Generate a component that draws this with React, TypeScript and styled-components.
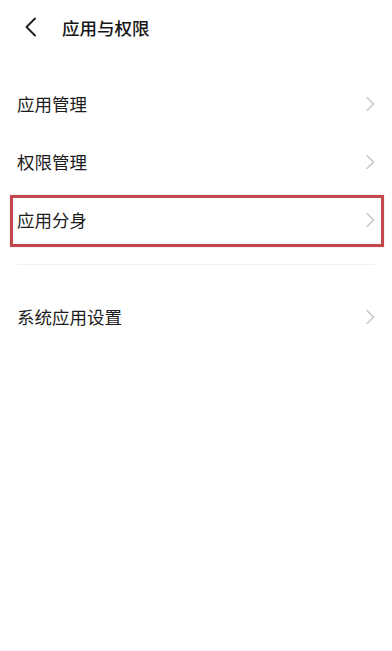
import React from "react";
import styled, { createGlobalStyle } from "styled-components";

const Global = createGlobalStyle`
  html, body { margin: 0; padding: 0; background: #ffffff; }
  body { font-family: "Noto Sans CJK SC", "Noto Sans", sans-serif; color: #1c1c1c; }
`;

const Page = styled.div`
  width: 392px;
  min-height: 651px;
  background: #ffffff;
  display: flex;
  flex-direction: column;
`;

const Header = styled.div`
  height: 56px;
  display: flex;
  align-items: center;
  padding-left: 24px;
  gap: 25px;
`;

const BackButton = styled.div`
  width: 13px;
  height: 20px;
  display: flex;
  align-items: center;
  justify-content: center;
  margin-top: -3px;
`;

const Title = styled.div`
  font-size: 17.5px;
  font-weight: 500;
  line-height: 1;
  color: #161616;
`;

const List = styled.div`
  display: flex;
  flex-direction: column;
  margin-top: 19px;
`;

const Row = styled.div<{ $highlight?: boolean }>`
  position: relative;
  height: 58px;
  display: flex;
  align-items: center;
  justify-content: space-between;
  padding: 0 17px;
  ${(p) =>
    p.$highlight
      ? `
    &::after {
      content: "";
      position: absolute;
      left: 10px;
      right: 8px;
      top: 4px;
      bottom: 2px;
      border: 3px solid #c2484e;
      box-shadow: 0 0 1px rgba(194,72,78,0.5);
      pointer-events: none;
    }
  `
      : ""}
`;

const Label = styled.div`
  font-size: 17.5px;
  line-height: 1;
  color: #1c1c1c;
`;

const Divider = styled.div`
  height: 1px;
  background: #f1f1f1;
  margin: 15px 17px 23px;
`;

const Chevron = () => (
  <svg width="10" height="16" viewBox="0 0 10 16">
    <path d="M2 1.5 L8.5 8 L2 14.5" fill="none" stroke="#c6c6c6" strokeWidth="1.5" strokeLinecap="round" strokeLinejoin="round" />
  </svg>
);

const BackIcon = () => (
  <svg width="13" height="20" viewBox="0 0 13 20">
    <path d="M11 1.5 L2.5 10 L11 18.5" fill="none" stroke="#1e1e1e" strokeWidth="1.9" strokeLinecap="round" strokeLinejoin="round" />
  </svg>
);

const items1 = [
  { label: "应用管理" },
  { label: "权限管理" },
  { label: "应用分身", highlight: true },
];

export default function App() {
  return (
    <Page>
      <Global />
      <Header>
        <BackButton>
          <BackIcon />
        </BackButton>
        <Title>应用与权限</Title>
      </Header>
      <List>
        {items1.map((it) => (
          <Row key={it.label} $highlight={it.highlight}>
            <Label>{it.label}</Label>
            <Chevron />
          </Row>
        ))}
        <Divider />
        <Row>
          <Label>系统应用设置</Label>
          <Chevron />
        </Row>
      </List>
    </Page>
  );
}
